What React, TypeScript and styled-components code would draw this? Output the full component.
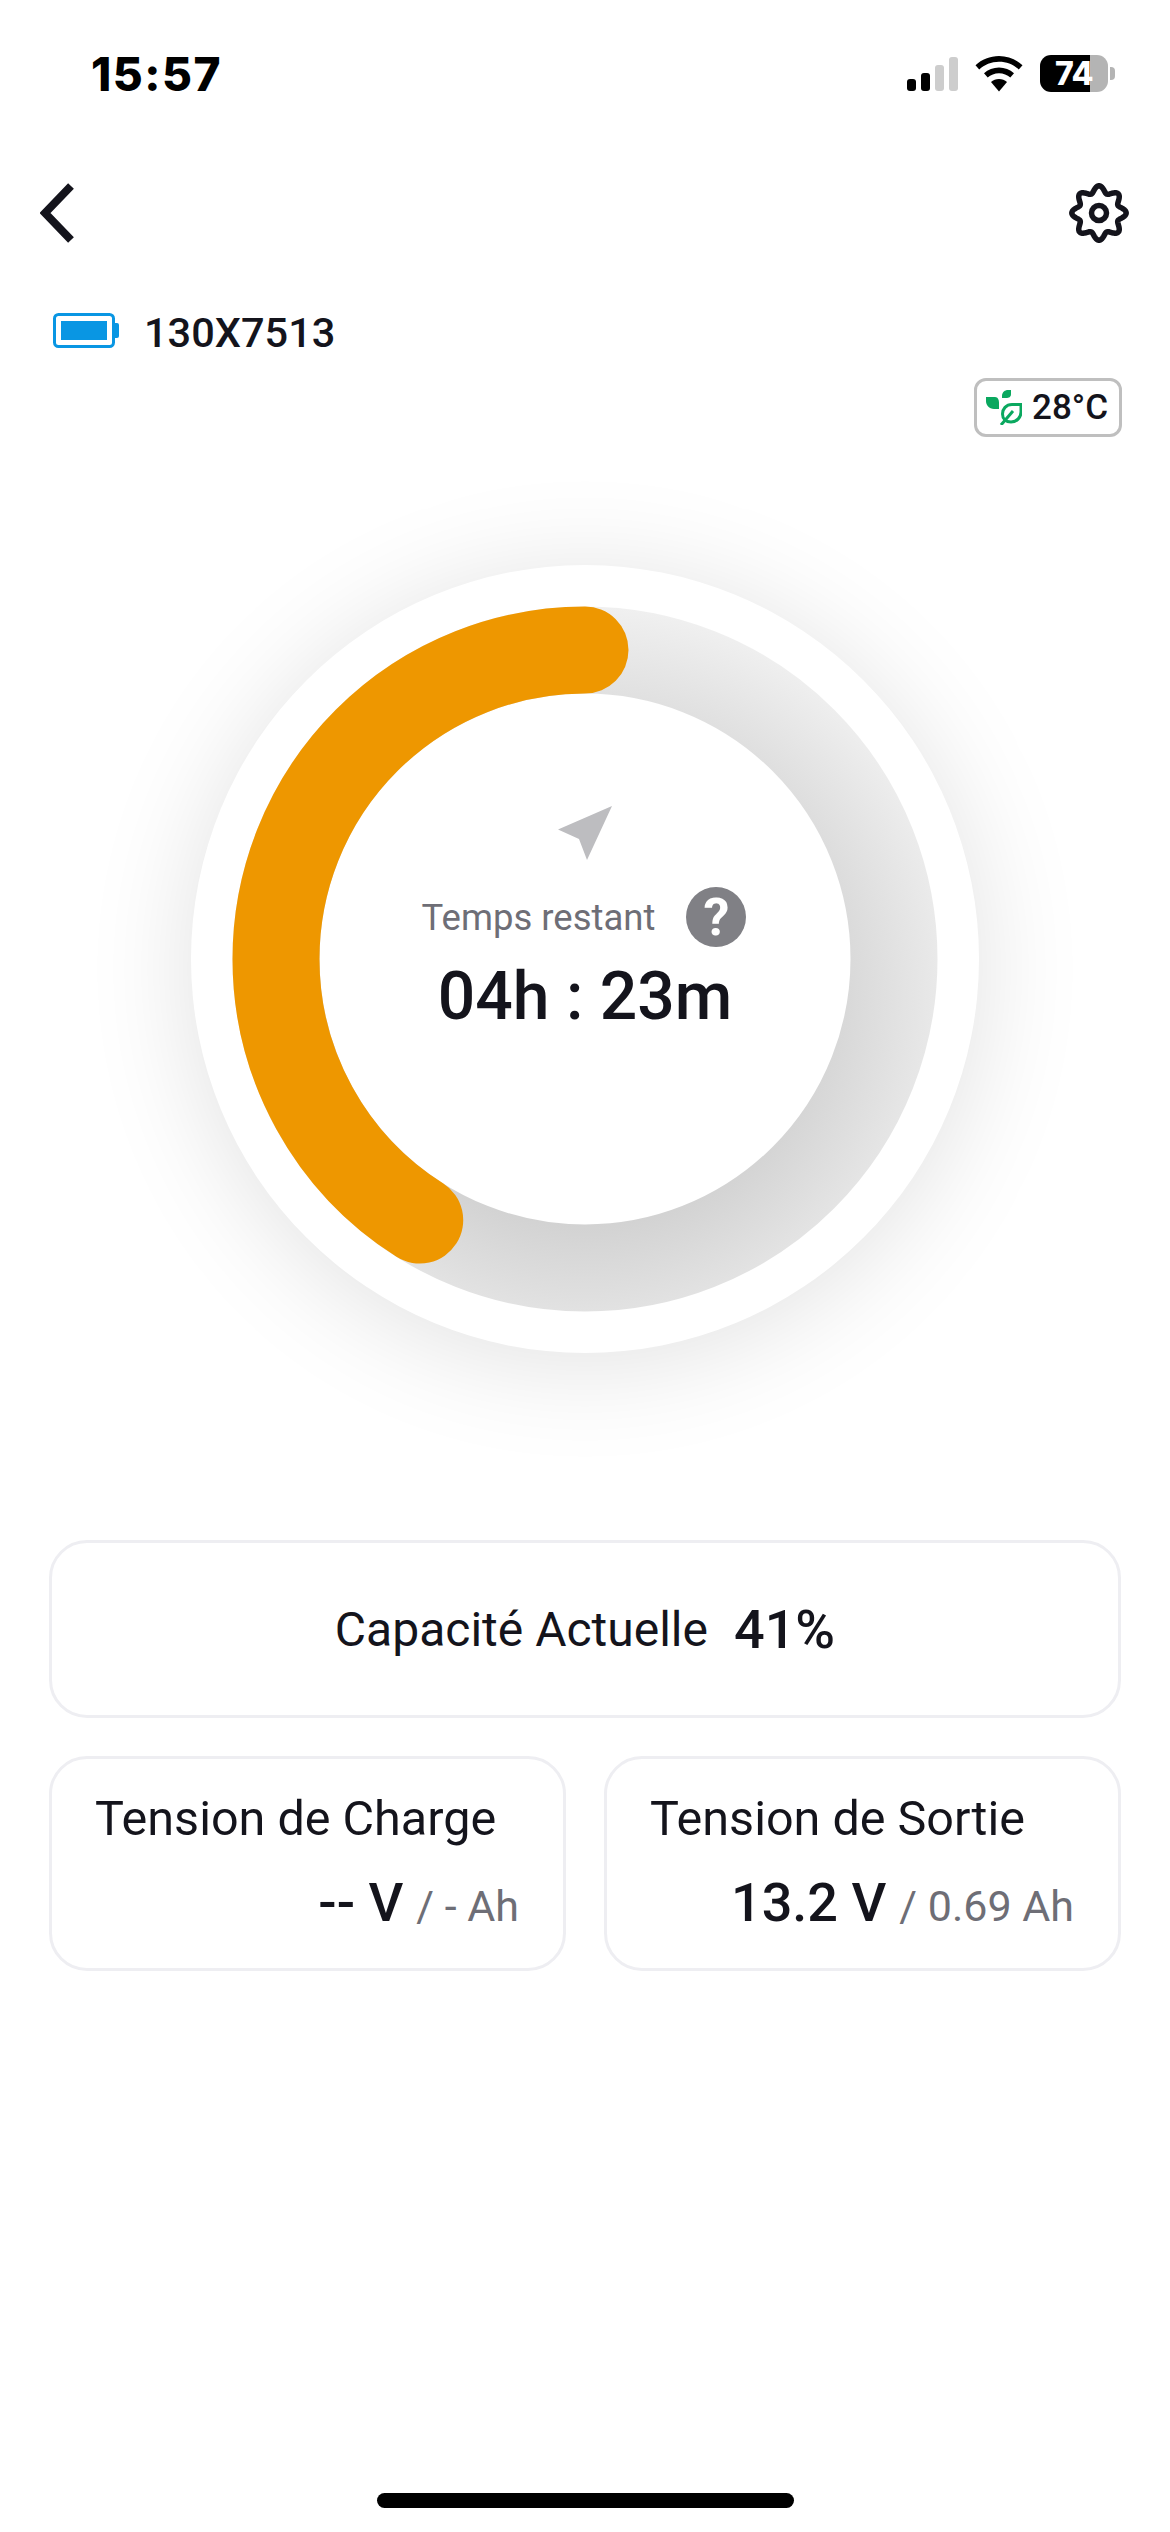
import React from 'react'
import styled, { createGlobalStyle } from 'styled-components'

const INK = '#14141c'
const MUTED = '#6e6e76'
const ORANGE = '#ee9700'

const GlobalStyle = createGlobalStyle`
    html, body {
        margin: 0;
        padding: 0;
        background: #fff;
    }
    * {
        box-sizing: border-box;
    }
`

const Page = styled.div`
    width: 1170px;
    height: 2532px;
    display: flex;
    flex-direction: column;
    background: #fff;
    color: ${INK};
    font-family: Roboto, 'Noto Sans', sans-serif;
    overflow: hidden;
`

const StatusBar = styled.div`
    height: 148px;
    padding: 53px 55px 0 91px;
    display: flex;
    justify-content: space-between;
    align-items: flex-start;
`

const Clock = styled.span`
    font-family: Inter, 'Liberation Sans', sans-serif;
    font-weight: 800;
    font-size: 46px;
    line-height: 42px;
    letter-spacing: 1.500px;
    color: #000;
`

const StatusIcons = styled.div`
    display: flex;
    align-items: center;
    gap: 17px;
    height: 37px;
    margin-top: 2px;
`

const SignalBars = styled.div`
    display: flex;
    align-items: flex-end;
    gap: 5px;
    height: 34px;
`

const SignalBar = styled.span<{ $level: number; $on: boolean }>`
    width: 9px;
    height: ${p => p.$level}px;
    border-radius: 3px;
    background: ${p => (p.$on ? '#000' : '#cdcdcd')};
`

const PhoneBattery = styled.div`
    width: 68px;
    height: 37px;
    border-radius: 11px;
    overflow: hidden;
    background: linear-gradient(to right, #000 0 50px, #b4b4b4 50px);
    display: flex;
    align-items: center;
    justify-content: center;
    color: #fff;
    font-family: Inter, 'Liberation Sans', sans-serif;
    font-weight: 800;
    font-size: 32px;
    letter-spacing: -0.5px;
`

const BatteryNub = styled.span`
    width: 5px;
    height: 13px;
    margin-left: -15px;
    border-radius: 0 4px 4px 0;
    background: #b4b4b4;
`

const Header = styled.div`
    height: 60px;
    margin-top: 35px;
    padding: 0 41px 0 40px;
    display: flex;
    justify-content: space-between;
    align-items: center;
`

const DeviceRow = styled.div`
    margin-top: 70px;
    height: 35px;
    padding-left: 53px;
    display: flex;
    align-items: center;
    gap: 25px;
`

const DeviceName = styled.span`
    font-size: 41.500px;
    font-weight: 500;
    line-height: 35px;
    padding-top: 3px;
    color: ${INK};
`

const TempRow = styled.div`
    margin-top: 30px;
    padding-right: 48px;
    display: flex;
    justify-content: flex-end;
`

const TempBadge = styled.div`
    width: 148px;
    height: 59px;
    padding-left: 9px;
    border: 3px solid #bfbfbf;
    border-radius: 12px;
    display: flex;
    align-items: center;
    gap: 10px;
    font-size: 35px;
    font-weight: 500;
    color: ${INK};
`

const Gauge = styled.div`
    position: relative;
    width: 788px;
    height: 788px;
    margin: 128px auto 0;
    border-radius: 50%;
    background: #fff;
    box-shadow: 0 10px 110px rgba(0, 0, 0, 0.12);
`

const GaugeCenter = styled.div`
    position: absolute;
    inset: 0;
    display: flex;
    flex-direction: column;
    align-items: center;
    padding-top: 241px;
`

const GaugeLabel = styled.div`
    margin-top: 27px;
    margin-left: -2px;
    height: 60px;
    display: flex;
    align-items: center;
    gap: 31px;
    font-size: 36.500px;
    color: ${MUTED};
`

const HelpBadge = styled.span`
    width: 60px;
    height: 60px;
    border-radius: 50%;
    background: #808085;
    color: #fff;
    display: flex;
    align-items: center;
    justify-content: center;
    font-size: 52px;
    font-weight: 700;
`

const GaugeTime = styled.div`
    margin-top: 10px;
    font-size: 66px;
    line-height: 80px;
    font-weight: 500;
    color: ${INK};
`

const Cards = styled.div`
    margin-top: 187px;
    padding: 0 49px;
    display: grid;
    grid-template-columns: 1fr 1fr;
    column-gap: 38px;
    row-gap: 38px;
`

const Card = styled.div`
    background: #fff;
    border: 3px solid #eeeef2;
    border-radius: 38px;
`

const CapacityCard = styled(Card)`
    grid-column: 1 / 3;
    height: 178px;
    display: flex;
    align-items: center;
    justify-content: center;
    gap: 26px;
    font-size: 48px;
`

const CapacityValue = styled.span`
    font-size: 54px;
    font-weight: 500;
`

const VoltageCard = styled(Card)`
    height: 215px;
    padding: 30px 44px 0 43px;
`

const VoltageTitle = styled.div`
    font-size: 48.500px;
    line-height: 60px;
`

const VoltageReading = styled.div`
    margin-top: 22px;
    display: flex;
    justify-content: flex-end;
    align-items: baseline;
    gap: 13px;
`

const VoltageValue = styled.span`
    font-size: 54px;
    font-weight: 500;
`

const VoltageExtra = styled.span`
    font-size: 43px;
    color: ${MUTED};
`

const HomeBar = styled.div`
    width: 417px;
    height: 15px;
    margin: auto auto 24px;
    border-radius: 8px;
    background: #000;
`

// wavy outline of the settings cog, eight lobes around the hub
const cogPath = () => {
    const points: string[] = []
    for (let i = 0; i < 160; i++) {
        const angle = (i / 160) * Math.PI * 2
        const radius = 23.8 + 3.4 * Math.cos(angle * 8)
        points.push(`${(30 + radius * Math.cos(angle)).toFixed(2)} ${(30 + radius * Math.sin(angle)).toFixed(2)}`)
    }
    return `M${points.join('L')}Z`
}

const WifiIcon = () => (
    <svg width="48" height="36" viewBox="0 0 48 36">
        <path d="M24 0C15 0 6.800 3.500 0.500 9.200L4.200 13.400C9.400 8.700 16.300 5.800 24 5.800C31.700 5.800 38.600 8.700 43.800 13.400L47.500 9.200C41.200 3.500 33 0 24 0Z" fill="#000" />
        <path d="M24 11.500C18.300 11.500 13 13.700 9 17.300L12.700 21.500C15.700 18.800 19.700 17.200 24 17.200C28.300 17.200 32.300 18.800 35.300 21.500L39 17.300C35 13.700 29.700 11.500 24 11.500Z" fill="#000" />
        <path d="M24 23C21 23 18.100 24.100 16 26L24 35.500L32 26C29.900 24.100 27 23 24 23Z" fill="#000" />
    </svg>
)

const BackIcon = () => (
    <svg width="34" height="60" viewBox="0 0 34 60">
        <path d="M31 3L5 30L31 57" fill="none" stroke={INK} strokeWidth="8" />
    </svg>
)

const CogIcon = () => (
    <svg width="60" height="60" viewBox="0 0 60 60">
        <path d={cogPath()} fill="none" stroke={INK} strokeWidth="5.500" strokeLinejoin="round" />
        <circle cx="30" cy="30" r="7.500" fill="none" stroke={INK} strokeWidth="5.500" />
    </svg>
)

const DeviceBatteryIcon = () => (
    <svg width="66" height="35" viewBox="0 0 66 35">
        <rect x="1.500" y="1.500" width="59" height="32" rx="4" fill="none" stroke="#0996e3" strokeWidth="3" />
        <rect x="8" y="8" width="46" height="19" fill="#0996e3" />
        <path d="M62 10h2a2 2 0 0 1 2 2v11a2 2 0 0 1 -2 2h-2Z" fill="#0996e3" />
    </svg>
)

const LeafIcon = () => (
    <svg width="36" height="35" viewBox="0 0 36 35">
        <path d="M0 7H9C12 7 13 10 13 13V19H8C3 19 0 15 0 11Z" fill="#0aa85f" />
        <path d="M25 0V4C25 7 23 8 20 8H16V6C16 2 19 0 22 0Z" fill="#0aa85f" />
        <path d="M35 14.500H26C20 14.500 16.500 19 16.500 24C16.500 29 20 32 25 32C31 32 35 27 35 22Z" fill="none" stroke="#0aa85f" strokeWidth="3" />
        <path d="M15 35L27 21" fill="none" stroke="#0aa85f" strokeWidth="3" />
    </svg>
)

const NavArrow = () => (
    <svg width="54" height="54" viewBox="0 0 54 54">
        <path d="M54 0L0 23.500L21 33L29 54Z" fill="#bdbdc0" />
    </svg>
)

// ring in the disc: grey track, darker towards the lower inside, plus the charge arc
// running anticlockwise from the top
const GaugeRing = ({ percent }: { percent: number }) => {
    const radius = 309
    const length = 2 * Math.PI * radius
    const filled = (percent / 100) * length
    return (
        <svg width="788" height="788" viewBox="0 0 788 788">
            <defs>
                <radialGradient id="trackShade" gradientUnits="userSpaceOnUse" cx="394" cy="434" r="393">
                    <stop offset="0.57" stopColor="#d2d2d2" />
                    <stop offset="1" stopColor="#f0f0f0" />
                </radialGradient>
            </defs>
            <circle cx="394" cy="394" r={radius} fill="none" stroke="url(#trackShade)" strokeWidth="87" />
            <circle
                cx="394"
                cy="394"
                r={radius}
                fill="none"
                stroke={ORANGE}
                strokeWidth="87"
                strokeLinecap="round"
                strokeDasharray={`${filled} ${length}`}
                transform="rotate(-90 394 394) scale(1 -1) translate(0 -788)"
            />
        </svg>
    )
}

const App = () => {
    return (
        <Page>
            <GlobalStyle />
            <StatusBar>
                <Clock>15:57</Clock>
                <StatusIcons>
                    <SignalBars>
                        <SignalBar $level={12} $on />
                        <SignalBar $level={18} $on />
                        <SignalBar $level={26} $on={false} />
                        <SignalBar $level={34} $on={false} />
                    </SignalBars>
                    <WifiIcon />
                    <PhoneBattery>74</PhoneBattery>
                    <BatteryNub />
                </StatusIcons>
            </StatusBar>

            <Header>
                <BackIcon />
                <CogIcon />
            </Header>

            <DeviceRow>
                <DeviceBatteryIcon />
                <DeviceName>130X7513</DeviceName>
            </DeviceRow>

            <TempRow>
                <TempBadge>
                    <LeafIcon />
                    28°C
                </TempBadge>
            </TempRow>

            <Gauge>
                <GaugeRing percent={41} />
                <GaugeCenter>
                    <NavArrow />
                    <GaugeLabel>
                        Temps restant
                        <HelpBadge>?</HelpBadge>
                    </GaugeLabel>
                    <GaugeTime>04h : 23m</GaugeTime>
                </GaugeCenter>
            </Gauge>

            <Cards>
                <CapacityCard>
                    Capacité Actuelle
                    <CapacityValue>41%</CapacityValue>
                </CapacityCard>
                <VoltageCard>
                    <VoltageTitle>Tension de Charge</VoltageTitle>
                    <VoltageReading>
                        <VoltageValue>-- V</VoltageValue>
                        <VoltageExtra>/ - Ah</VoltageExtra>
                    </VoltageReading>
                </VoltageCard>
                <VoltageCard>
                    <VoltageTitle>Tension de Sortie</VoltageTitle>
                    <VoltageReading>
                        <VoltageValue>13.2 V</VoltageValue>
                        <VoltageExtra>/ 0.69 Ah</VoltageExtra>
                    </VoltageReading>
                </VoltageCard>
            </Cards>

            <HomeBar />
        </Page>
    )
}

export default App
